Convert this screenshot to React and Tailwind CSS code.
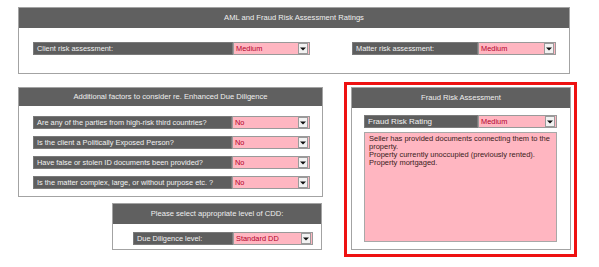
import React from 'react';

const panelBorder = 'border border-[#a3a3a3]';

function Arrow() {
  return (
    <span className="ml-auto mr-px flex h-[11px] w-[10px] items-center justify-center border border-[#9a9a9a] bg-[#f2f2f2]">
      <svg width="6" height="4" viewBox="0 0 6 4">
        <path d="M0 0.5h6L3 3.5z" fill="#111" />
      </svg>
    </span>
  );
}

function Field({ label, value, labelW, valueW, big }) {
  return (
    <div className="flex h-[13px]">
      <div
        className={`flex items-center border border-[#7a7a7a] bg-[#5e5e5e] pl-[3px] text-[#f2f2f2] ${big ? 'text-[8px]' : 'text-[7.4px]'} ${labelW}`}
      >
        {label}
      </div>
      <div className={`flex items-center border border-[#9a9a9a] bg-[#ffb6c1] pl-[2px] text-[7.4px] text-[#b3002a] ${valueW}`}>
        {value}
        <Arrow />
      </div>
    </div>
  );
}

function Panel({ title, className, headerH = 'h-[20px]', children }) {
  return (
    <div className={`${panelBorder} bg-white ${className}`}>
      <div className={`flex items-center justify-center bg-[#606060] text-[7.6px] text-[#efefef] ${headerH}`}>
        {title}
      </div>
      {children}
    </div>
  );
}

const questions = [
  'Are any of the parties from high-risk third countries?',
  'Is the client a Politically Exposed Person?',
  'Have false or stolen ID documents been provided?',
  'Is the matter complex, large, or without purpose etc. ?',
];

export default function App() {
  return (
    <div className="h-[267px] w-[599px] bg-white pl-[18px] pt-[7px] font-['Liberation_Sans',Arial,sans-serif]">
      <Panel title="AML and Fraud Risk Assessment Ratings" className="h-[67px] w-[552px]">
        <div className="flex pl-[14px] pt-[14px]">
          <Field label="Client risk assessment:" value="Medium" labelW="w-[200px]" valueW="w-[77px]" />
          <div className="ml-[42px]">
            <Field label="Matter risk assessment:" value="Medium" labelW="w-[126px]" valueW="w-[78px]" />
          </div>
        </div>
      </Panel>

      <div className="mt-[8px] flex">
        <div className="mt-[5px] flex w-[305px] flex-col">
          <Panel
            title="Additional factors to consider re. Enhanced Due Diligence"
            headerH="h-[18px]"
            className="h-[110px] w-[305px]"
          >
            <div className="flex flex-col gap-[7px] pl-[14px] pt-[10px]">
              {questions.map((q) => (
                <Field key={q} label={q} value="No" labelW="w-[199px]" valueW="w-[78px]" />
              ))}
            </div>
          </Panel>
          <Panel
            title="Please select appropriate level of CDD:"
            className="ml-[94px] mt-[6px] h-[47px] w-[210px]"
          >
            <div className="flex pl-[20px] pt-[8px]">
              <Field label="Due Diligence level:" value="Standard DD" labelW="w-[100px]" valueW="w-[80px]" />
            </div>
          </Panel>
        </div>

        <div className="ml-[21px] h-[175px] w-[233px] border-[3px] border-[#ee1111] pl-[4px] pt-[2px]">
          <Panel title="Fraud Risk Assessment" className="h-[163px] w-[220px]">
            <div className="flex flex-col pl-[12px] pt-[7px]">
              <Field label="Fraud Risk Rating" value="Medium" labelW="w-[114px]" valueW="w-[79px]" big />
              <div className="mt-[4px] h-[110px] w-[193px] border border-[#a8a8a8] bg-[#ffb6c1] px-[4px] pt-[2px] text-[7.5px] leading-[8px] text-[#3a1c1c]">
                Seller has provided documents connecting them to the property.
                <br />
                Property currently unoccupied (previously rented).
                <br />
                Property mortgaged.
              </div>
            </div>
          </Panel>
        </div>
      </div>
    </div>
  );
}
